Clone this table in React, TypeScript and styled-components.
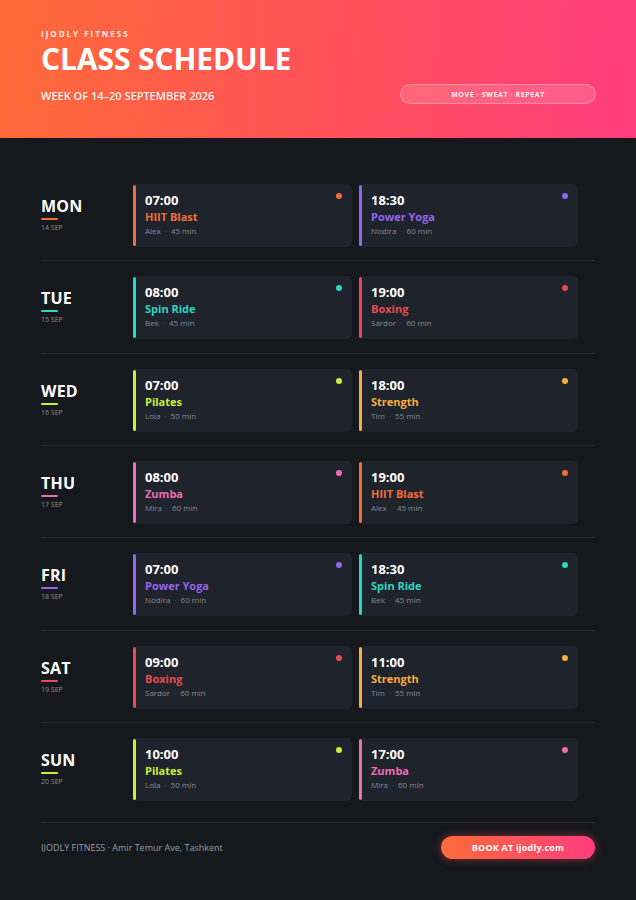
import React from "react";
import styled, { createGlobalStyle } from "styled-components";

const GlobalStyle = createGlobalStyle`
  body {
    margin: 0;
    background: #15181d;
    font-family: "Open Sans", "Noto Sans", sans-serif;
    color: #fff;
  }
`;

const Page = styled.div`
  width: 636px;
  min-height: 900px;
  background: #15181d;
`;

const Header = styled.header`
  height: 138px;
  box-sizing: border-box;
  padding: 28px 40px 0 41px;
  background: linear-gradient(95deg, #ff6b38 0%, #ff5257 50%, #ff3d7e 100%);
  display: flex;
  justify-content: space-between;
  align-items: flex-start;
`;

const Brand = styled.div`
  font-size: 8px;
  font-weight: 700;
  letter-spacing: 2px;
  line-height: 12px;
  color: rgba(255, 255, 255, 0.9);
`;

const Title = styled.h1`
  margin: 2px 0 0;
  font-size: 30px;
  font-weight: 700;
  line-height: 34px;
  letter-spacing: -0.1px;
`;

const Week = styled.div`
  margin-top: 13px;
  font-size: 11px;
  font-weight: 600;
  line-height: 14px;
  color: rgba(255, 255, 255, 0.95);
`;

const Pill = styled.div`
  margin-top: 56px;
  width: 196px;
  height: 20px;
  box-sizing: border-box;
  border-radius: 10px;
  background: rgba(255, 255, 255, 0.15);
  border: 1px solid rgba(255, 255, 255, 0.28);
  display: flex;
  align-items: center;
  justify-content: center;
  font-size: 7px;
  font-weight: 700;
  letter-spacing: 0.6px;
  color: rgba(255, 255, 255, 0.92);
`;

const Main = styled.main`
  padding: 31px 41px 0;
`;

const Row = styled.div<{ $last?: boolean }>`
  display: grid;
  grid-template-columns: 85px 219px 219px;
  column-gap: 7px;
  align-items: center;
  padding: 15px 0 13.33px;
  border-bottom: ${(p) => (p.$last ? "none" : "1px solid #242830")};
`;

const Day = styled.div`
  display: flex;
  flex-direction: column;
  padding-bottom: 2px;
`;

const DayName = styled.div`
  font-size: 16px;
  font-weight: 700;
  line-height: 18px;
  letter-spacing: 0.2px;
`;

const DayBar = styled.div<{ $c: string }>`
  width: 17px;
  height: 2px;
  margin-top: 3px;
  background: ${(p) => p.$c};
  border-radius: 1px;
`;

const DayDate = styled.div`
  margin-top: 3px;
  font-size: 7px;
  line-height: 9px;
  color: #8a9099;
`;

const Card = styled.div<{ $c: string }>`
  position: relative;
  height: 63px;
  box-sizing: border-box;
  padding: 8px 12px 0 12px;
  background: #1f232b;
  border-radius: 5px;
  &::before {
    content: "";
    position: absolute;
    left: 0;
    top: 1px;
    bottom: 1px;
    width: 3px;
    border-radius: 2px;
    background: ${(p) => p.$c};
  }
`;

const Dot = styled.span<{ $c: string }>`
  position: absolute;
  right: 10px;
  top: 9px;
  width: 6px;
  height: 6px;
  border-radius: 50%;
  background: ${(p) => p.$c};
`;

const Time = styled.div`
  font-size: 13px;
  font-weight: 700;
  line-height: 16px;
`;

const ClassName = styled.div<{ $c: string }>`
  margin-top: 2px;
  font-size: 11px;
  font-weight: 700;
  line-height: 14px;
  color: ${(p) => p.$c};
`;

const Meta = styled.div`
  margin-top: 1px;
  font-size: 8px;
  line-height: 12px;
  color: #858b94;
  span {
    margin: 0 4px;
    color: #5d636c;
  }
`;

const Footer = styled.footer`
  margin: 8px 41px 0;
  padding: 13px 0 0;
  border-top: 1px solid #242830;
  display: flex;
  justify-content: space-between;
  align-items: center;
`;

const FootText = styled.div`
  font-size: 9px;
  color: #969ca5;
`;

const BookButton = styled.div`
  width: 154px;
  height: 23px;
  border-radius: 12px;
  background: linear-gradient(90deg, #ff6b38, #ff3d7e);
  box-shadow: 0 0 10px rgba(255, 80, 90, 0.45);
  display: flex;
  align-items: center;
  justify-content: center;
  font-size: 9px;
  font-weight: 700;
  letter-spacing: 0.2px;
`;

const C = {
  orange: "#f36d3b",
  purple: "#9466ee",
  teal: "#2fd5c3",
  red: "#ea4a52",
  lime: "#c8f03a",
  amber: "#f8ae3c",
  pink: "#f06cb4",
};

type Session = { time: string; name: string; coach: string; mins: number; c: string };

const days: { day: string; date: string; bar: string; sessions: Session[] }[] = [
  {
    day: "MON", date: "14 SEP", bar: C.orange,
    sessions: [
      { time: "07:00", name: "HIIT Blast", coach: "Alex", mins: 45, c: C.orange },
      { time: "18:30", name: "Power Yoga", coach: "Nodira", mins: 60, c: C.purple },
    ],
  },
  {
    day: "TUE", date: "15 SEP", bar: C.teal,
    sessions: [
      { time: "08:00", name: "Spin Ride", coach: "Bek", mins: 45, c: C.teal },
      { time: "19:00", name: "Boxing", coach: "Sardor", mins: 60, c: C.red },
    ],
  },
  {
    day: "WED", date: "16 SEP", bar: C.lime,
    sessions: [
      { time: "07:00", name: "Pilates", coach: "Lola", mins: 50, c: C.lime },
      { time: "18:00", name: "Strength", coach: "Tim", mins: 55, c: C.amber },
    ],
  },
  {
    day: "THU", date: "17 SEP", bar: C.pink,
    sessions: [
      { time: "08:00", name: "Zumba", coach: "Mira", mins: 60, c: C.pink },
      { time: "19:00", name: "HIIT Blast", coach: "Alex", mins: 45, c: C.orange },
    ],
  },
  {
    day: "FRI", date: "18 SEP", bar: C.purple,
    sessions: [
      { time: "07:00", name: "Power Yoga", coach: "Nodira", mins: 60, c: C.purple },
      { time: "18:30", name: "Spin Ride", coach: "Bek", mins: 45, c: C.teal },
    ],
  },
  {
    day: "SAT", date: "19 SEP", bar: C.red,
    sessions: [
      { time: "09:00", name: "Boxing", coach: "Sardor", mins: 60, c: C.red },
      { time: "11:00", name: "Strength", coach: "Tim", mins: 55, c: C.amber },
    ],
  },
  {
    day: "SUN", date: "20 SEP", bar: C.lime,
    sessions: [
      { time: "10:00", name: "Pilates", coach: "Lola", mins: 50, c: C.lime },
      { time: "17:00", name: "Zumba", coach: "Mira", mins: 60, c: C.pink },
    ],
  },
];

export default function App() {
  return (
    <Page>
      <GlobalStyle />
      <Header>
        <div>
          <Brand>IJODLY FITNESS</Brand>
          <Title>CLASS SCHEDULE</Title>
          <Week>WEEK OF 14–20 SEPTEMBER 2026</Week>
        </div>
        <Pill>MOVE · SWEAT · REPEAT</Pill>
      </Header>
      <Main>
        {days.map((d, i) => (
          <Row key={d.day} $last={i === days.length - 1}>
            <Day>
              <DayName>{d.day}</DayName>
              <DayBar $c={d.bar} />
              <DayDate>{d.date}</DayDate>
            </Day>
            {d.sessions.map((s) => (
              <Card key={s.time} $c={s.c}>
                <Dot $c={s.c} />
                <Time>{s.time}</Time>
                <ClassName $c={s.c}>{s.name}</ClassName>
                <Meta>
                  {s.coach}
                  <span>·</span>
                  {s.mins} min
                </Meta>
              </Card>
            ))}
          </Row>
        ))}
      </Main>
      <Footer>
        <FootText>IJODLY FITNESS · Amir Temur Ave, Tashkent</FootText>
        <BookButton>BOOK AT ijodly.com</BookButton>
      </Footer>
    </Page>
  );
}
